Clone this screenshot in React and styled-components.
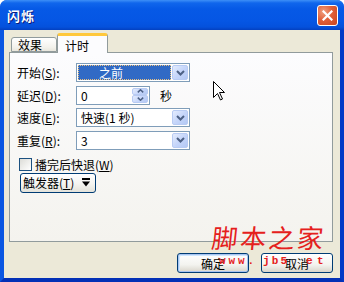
import React from "react";
import styled, { createGlobalStyle } from "styled-components";

const GlobalStyle = createGlobalStyle`
  html, body { margin: 0; padding: 0; background: #ffffff; }
  body { font-family: "Noto Sans CJK SC", "Liberation Sans", sans-serif; }
`;

const cjk = `"Noto Sans CJK SC", "Liberation Sans", sans-serif`;

const Dialog = () => (
  <Window>
    <GlobalStyle />
    <TitleBar>
      <Title>闪烁</Title>
      <CloseButton>
        <svg width="11" height="11" viewBox="0 0 11 11">
          <path d="M1.5 1.5 L9.5 9.5 M9.5 1.5 L1.5 9.5" stroke="#fff" strokeWidth="2.2" strokeLinecap="square" />
        </svg>
      </CloseButton>
    </TitleBar>
    <Frame>
      <Client>
        <TabStrip>
          <Tab>效果</Tab>
          <Tab active>计时</Tab>
        </TabStrip>
        <Panel>
          <Fields>
            <Row>
              <Label>开始(<u>S</u>):</Label>
              <Combo>
                <Selected>之前</Selected>
                <DropButton><Chevron /></DropButton>
              </Combo>
            </Row>
            <Row>
              <Label>延迟(<u>D</u>):</Label>
              <Spin>
                <Value>0</Value>
                <SpinButtons>
                  <SpinHalf><Chevron up small /></SpinHalf>
                  <SpinHalf><Chevron small /></SpinHalf>
                </SpinButtons>
              </Spin>
              <Unit>秒</Unit>
            </Row>
            <Row>
              <Label>速度(<u>E</u>):</Label>
              <Combo>
                <Value>快速(1 秒)</Value>
                <DropButton><Chevron /></DropButton>
              </Combo>
            </Row>
            <Row>
              <Label>重复(<u>R</u>):</Label>
              <Combo>
                <Value>3</Value>
                <DropButton><Chevron /></DropButton>
              </Combo>
            </Row>
          </Fields>
          <CheckRow>
            <CheckBox />
            <CheckText>播完后快退(<u>W</u>)</CheckText>
          </CheckRow>
          <TriggerButton>
            <span>触发器(<u>T</u>)</span>
            <svg width="8" height="9" viewBox="0 0 8 9">
              <rect x="0" y="0" width="8" height="2" fill="#000" />
              <path d="M0 3.5 H8 L4 8.5 Z" fill="#000" />
            </svg>
          </TriggerButton>
        </Panel>
        <ButtonRow>
          <PushButton primary>确定</PushButton>
          <PushButton>取消</PushButton>
        </ButtonRow>
      </Client>
    </Frame>
    <Cursor width="12" height="20" viewBox="0 0 12 20">
      <path d="M0.5 0.5 V16.5 L4.5 12.5 L7.5 19 L9.5 18 L6.5 11.5 H11.5 Z" fill="#fff" stroke="#000" strokeWidth="1" strokeLinejoin="miter" />
    </Cursor>
    <BrandMark>脚本之家</BrandMark>
    <SiteMark left={219} pitch={2.9}>www.</SiteMark>
    <SiteMark left={263} pitch={2.2}>jb5</SiteMark>
    <SiteMark left={306} pitch={4.4}>et</SiteMark>
  </Window>
);

const Chevron = ({ up, small }) => (
  <svg width={small ? 7 : 9} height={small ? 4 : 6} viewBox={small ? "0 0 7 4" : "0 0 9 6"}>
    <path
      d={small ? (up ? "M0.8 3.4 L3.5 0.8 L6.2 3.4" : "M0.8 0.6 L3.5 3.2 L6.2 0.6") : "M1 1 L4.5 4.5 L8 1"}
      fill="none"
      stroke="#4D6185"
      strokeWidth={small ? 1.5 : 2}
    />
  </svg>
);

const Window = styled.div`
  position: relative;
  width: 344px;
  height: 282px;
  display: flex;
  flex-direction: column;
  overflow: hidden;
  border-radius: 7px 7px 0 0;
  background: #0a4ed8;
`;

const TitleBar = styled.div`
  height: 30px;
  flex: none;
  display: flex;
  align-items: center;
  justify-content: space-between;
  padding: 0 6px 0 7px;
  background: linear-gradient(
    to bottom,
    #3d8ff7 0%,
    #1066ec 10%,
    #0659e6 30%,
    #0556e4 70%,
    #0451dc 90%,
    #0340c0 100%
  );
`;

const Title = styled.div`
  font-family: ${cjk};
  font-size: 13px;
  font-weight: bold;
  color: #ffffff;
  text-shadow: 1px 1px 0 #0a1b7a;
  letter-spacing: 1px;
`;

const CloseButton = styled.div`
  width: 21px;
  height: 21px;
  box-sizing: border-box;
  border: 1px solid #ffffff;
  border-radius: 3px;
  display: flex;
  align-items: center;
  justify-content: center;
  background: radial-gradient(circle at 30% 30%, #f0a080 0%, #e0603a 45%, #c8441e 100%);
`;

const Frame = styled.div`
  flex: 1;
  display: flex;
  border-left: 4px solid #0a56e2;
  border-right: 4px solid #0339c6;
  border-bottom: 4px solid #0330b6;
`;

const Client = styled.div`
  flex: 1;
  display: flex;
  flex-direction: column;
  background: #ece9d8;
  padding: 3px 7px 0 5px;
`;

const TabStrip = styled.div`
  height: 19px;
  display: flex;
  align-items: flex-end;
  padding-left: 2px;
  position: relative;
  z-index: 1;
`;

const Tab = styled.div`
  box-sizing: border-box;
  width: ${p => (p.active ? 51 : 46)}px;
  height: ${p => (p.active ? 20 : 15)}px;
  margin-bottom: ${p => (p.active ? -1 : 0)}px;
  padding-left: ${p => (p.active ? 7 : 6)}px;
  padding-top: ${p => (p.active ? 2 : 0)}px;
  border: 1px solid #919b9c;
  border-bottom: ${p => (p.active ? "none" : "1px solid #919b9c")};
  border-top: ${p => (p.active ? "3px solid #ffc83c" : "1px solid #919b9c")};
  border-radius: 3px 3px 0 0;
  background: ${p => (p.active ? "#fcfcfe" : "linear-gradient(#ffffff, #f3f2ec 70%, #e8e6dc)")};
  font-family: ${cjk};
  font-size: 12px;
  line-height: 13px;
  color: #000000;
  display: flex;
  align-items: center;
`;

const Panel = styled.div`
  box-sizing: border-box;
  height: 190px;
  border: 1px solid #919b9c;
  padding: 10px 7px;
  background: linear-gradient(#fcfcfe, #f4f3ee);
  display: flex;
  flex-direction: column;
  align-items: flex-start;
`;

const Fields = styled.div`
  display: flex;
  flex-direction: column;
  gap: 3.5px;
`;

const Row = styled.div`
  display: flex;
  align-items: center;
  height: 19px;
`;

const Label = styled.div`
  width: 59px;
  flex: none;
  font-family: ${cjk};
  font-size: 12px;
  color: #000000;
  white-space: nowrap;
`;

const Combo = styled.div`
  box-sizing: border-box;
  width: 114px;
  height: 19px;
  border: 1px solid #7f9db9;
  background: #ffffff;
  display: flex;
  align-items: stretch;
  padding: 1px;
`;

const Value = styled.div`
  flex: 1;
  font-family: ${cjk};
  font-size: 12px;
  line-height: 15px;
  padding-left: 3px;
  color: #000000;
  white-space: nowrap;
`;

const Selected = styled.div`
  flex: 1;
  margin-right: 1px;
  background: #316ac5;
  outline: 1px dotted #e8c080;
  outline-offset: -1px;
  color: #ffffff;
  font-family: ${cjk};
  font-size: 12px;
  line-height: 15px;
  padding-left: 21px;
`;

const DropButton = styled.div`
  box-sizing: border-box;
  width: 16px;
  flex: none;
  border: 1px solid #b8cbf3;
  border-radius: 2px;
  background: linear-gradient(135deg, #e4ecfd 0%, #c6d6fa 50%, #b3c8f4 100%);
  display: flex;
  align-items: center;
  justify-content: center;
`;

const Spin = styled(Combo)`
  width: 74px;
`;

const SpinButtons = styled.div`
  width: 16px;
  flex: none;
  display: flex;
  flex-direction: column;
`;

const SpinHalf = styled(DropButton)`
  width: 16px;
  flex: 1;
`;

const Unit = styled.div`
  margin-left: 10px;
  font-family: ${cjk};
  font-size: 12px;
  color: #000000;
`;

const CheckRow = styled.div`
  display: flex;
  align-items: center;
  height: 13px;
  margin-top: 8px;
  padding-left: 2px;
`;

const CheckBox = styled.div`
  box-sizing: border-box;
  width: 13px;
  height: 13px;
  border: 1px solid #1c5180;
  background: linear-gradient(135deg, #dcdcd7, #ffffff);
`;

const CheckText = styled.div`
  margin-left: 3px;
  font-family: ${cjk};
  font-size: 12px;
  color: #000000;
  white-space: nowrap;
`;

const TriggerButton = styled.div`
  box-sizing: border-box;
  margin: 2px 0 0 3px;
  width: 76px;
  height: 20px;
  border: 1px solid #003c74;
  border-radius: 3px;
  background: linear-gradient(#ffffff, #f4f4f0 55%, #e3e2da);
  display: flex;
  align-items: center;
  justify-content: space-between;
  padding: 0 5px 0 2px;
  font-family: ${cjk};
  font-size: 12px;
  color: #000000;
`;

const ButtonRow = styled.div`
  display: flex;
  justify-content: flex-end;
  gap: 12px;
  margin-top: 11px;
`;

const PushButton = styled.div`
  box-sizing: border-box;
  width: 72px;
  height: 20px;
  border: 1px solid #003c74;
  border-radius: 3px;
  background: linear-gradient(#ffffff, #f3f3ef 60%, #d9d5cb);
  box-shadow: ${p => (p.primary ? "inset 0 0 0 1px #a8c4f0, inset 1px 1px 0 1px #cee7ff" : "none")};
  display: flex;
  align-items: center;
  justify-content: center;
  font-family: ${cjk};
  font-size: 12px;
  color: #000000;
`;

const Cursor = styled.svg`
  position: absolute;
  left: 213px;
  top: 81px;
`;

const BrandMark = styled.div`
  position: absolute;
  left: 212px;
  top: 224px;
  font-family: ${cjk};
  font-size: 26px;
  line-height: 26px;
  letter-spacing: 2.5px;
  color: #e5201c;
  transform: skewX(-6deg);
  white-space: nowrap;
`;

const SiteMark = styled.div`
  position: absolute;
  left: ${p => p.left}px;
  top: 256px;
  font-family: "Liberation Mono", monospace;
  font-size: 11px;
  line-height: 11px;
  font-weight: bold;
  letter-spacing: ${p => p.pitch}px;
  color: #e5201c;
  white-space: nowrap;
`;

export default Dialog;
